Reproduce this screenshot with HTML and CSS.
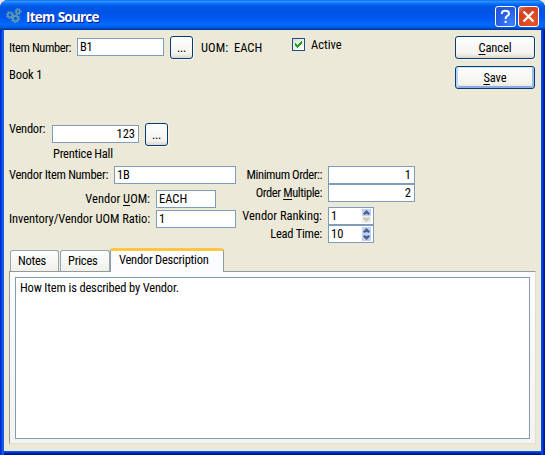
FILE: index.html
```
<!DOCTYPE html>
<html lang="en">
<head>
<meta charset="utf-8">
<title>Item Source</title>
<link rel="stylesheet" href="styles.css">
</head>
<body>
<div class="window">
  <header class="titlebar">
    <svg class="app-icon" width="16" height="16" viewBox="0 0 16 16" fill="none" stroke="#5e9caa">
      <circle cx="4" cy="7" r="2.2" stroke-width="1.6"/><circle cx="4" cy="7" r="3.5" stroke-width="1.2" stroke-dasharray="1.4 1.3"/>
      <circle cx="12" cy="3.5" r="1.8" stroke-width="1.4"/><circle cx="12" cy="3.5" r="3" stroke-width="1.2" stroke-dasharray="1.3 1.2"/>
      <circle cx="9.5" cy="10.5" r="2.6" stroke-width="1.8"/><circle cx="9.5" cy="10.5" r="4" stroke-width="1.3" stroke-dasharray="1.6 1.5"/>
    </svg>
    <h1 class="title">Item Source</h1>
    <button class="caption help" aria-label="Help"><svg width="19" height="19" viewBox="0 0 19 19" fill="none" stroke="#fff" stroke-width="2"><path d="M5.8 7V6Q6.2 3.7 9.5 3.7Q13 3.7 13 6.5Q13 8.1 11 9.2Q9.6 10 9.6 12M9.6 13.7V16"/></svg></button>
    <button class="caption close" aria-label="Close"><svg width="19" height="19" viewBox="0 0 19 19" fill="none" stroke="#fff" stroke-width="2.3"><path d="M4.5 4.5L14.5 14.5M14.5 4.5L4.5 14.5"/></svg></button>
  </header>
  <main class="content">
    <section class="top">
      <div class="identity">
        <div class="item-row">
          <span class="label item-label">Item Number:</span>
          <span class="field item-field">B1</span>
          <button class="btn browse">...</button>
          <span class="uom-label">UOM:</span><span class="uom-value">EACH</span>
          <span class="check"><svg width="11" height="11" viewBox="0 0 11 11" shape-rendering="crispEdges"><path d="M2 4v3l2 2 5-5V1L4 6z" fill="#21a121"/></svg></span>
          <span class="active-label">Active</span>
        </div>
        <div class="book">Book 1</div>
      </div>
      <div class="actions">
        <button class="btn action"><span class="cancel-text"><u>C</u>ancel</span></button>
        <button class="btn action default"><span><u>S</u>ave</span></button>
      </div>
    </section>
    <section class="vendor-row">
      <span class="vendor-label">Vendor:</span>
      <span class="field number vendor-field">123</span>
      <button class="btn browse">...</button>
    </section>
    <div class="vendor-name">Prentice Hall</div>
    <section class="details">
      <div class="left">
        <div class="row"><span class="vin-label">Vendor Item Number:</span><span class="field vin">1B</span></div>
        <div class="row vuom-row"><span class="lbl vuom-label">Vendor <u>U</u>OM:</span><span class="field vuom">EACH</span></div>
        <div class="row ratio-row"><span class="lbl ratio-label">Inventory/Vendor UOM Ratio:</span><span class="field ratio">1</span></div>
      </div>
      <div class="right">
        <div class="row"><span class="lbl min-label">Minimum Order::</span><span class="field number qty">1</span></div>
        <div class="row"><span class="lbl mult-label">Order <u>M</u>ultiple:</span><span class="field number qty">2</span></div>
        <div class="row rank-row"><span class="lbl rank-label">Vendor Ranking:</span><span class="field spin">1<span class="steps"><i class="step up"></i><i class="step down off"></i></span></span></div>
        <div class="row"><span class="lbl lead-label">Lead Time:</span><span class="field spin">10<span class="steps"><i class="step up"></i><i class="step down"></i></span></span></div>
      </div>
    </section>
    <nav class="tabs">
      <span class="tab notes">Notes</span><span class="tab prices">Prices</span><span class="tab selected"><span>Vendor Description</span></span>
    </nav>
    <section class="panel"><div class="memo">How Item is described by Vendor.</div></section>
  </main>
</div>
</body>
</html>
```
FILE: styles.css
```
* { box-sizing: border-box; }
body { margin: 0; background: #ece9d8; font: 12.5px/16px Roboto, "Liberation Sans", sans-serif; font-stretch: 85%; letter-spacing: -.25px; color: #000; }
.window { width: 545px; height: 455px; display: flex; flex-direction: column; overflow: hidden; border-radius: 8px 8px 0 0; background: linear-gradient(90deg, #0019cf 0, #0831d9 1px, #166aee 3px, #0855dd 4px, #0855dd 541px, #0046ee 542px, #001ea0 544px, #00138c 545px); }
.titlebar { height: 30px; flex: none; display: flex; align-items: flex-start; padding: 6px 6px 0; background: linear-gradient(#0058ee 0, #3593ff 1px, #288eff 2px, #127dff 3px, #036ffc 4px, #0262ee 5px, #0057e5 7px, #0054e3 12px, #0055eb 15px, #005bf5 20px, #026afe 24px, #0062ef 27px, #0052d6 28px, #0040ab 29px, #003092 30px); }
.app-icon { margin: 2px 4px 0 0; }
.title { margin: 2px auto 0 0; font: bold 13.5px/18px "Open Sans", "Noto Sans", sans-serif; letter-spacing: -.78px; word-spacing: .5px; color: #fff; text-shadow: 1px 1px #0f1089; }
.caption { width: 21px; height: 21px; padding: 0; border: 1px solid #fff; border-radius: 3px; margin-left: 2px; display: block; }
.caption svg { display: block; }
.help { background: radial-gradient(circle at 80% 90%, #3b80ff, #2355dd 75%); }
.close { background: radial-gradient(circle at 70% 80%, #e85528, #d34020 70%, #e48068); }
.content { width: 537px; height: 421px; margin-left: 4px; padding: 6px 6px 0 5px; background: #ece9d8; box-shadow: 0 1px #0855dd, 0 2px #0036dd, 0 3px #001ea0, 0 4px #00138c; white-space: nowrap; }
.top { display: flex; justify-content: space-between; height: 87px; }
.item-row { display: flex; align-items: center; height: 23px; }
.label { width: 68px; }
.item-label { letter-spacing: -.4px; }
.field { height: 18px; border: 1px solid #7f9db9; background: #fff; padding: 0 2px; line-height: 16px; flex: none; }
.item-field { width: 87px; margin: -1px 6px 0 0; }
.btn { height: 23px; padding: 0; border: 1px solid #003c74; border-radius: 3px; background: linear-gradient(#fff, #f3f2ed 80%, #dcd7cb); color: #000; font: inherit; letter-spacing: inherit; box-shadow: 1px 1px #f7f5ed; }
.browse { width: 23px; flex: none; line-height: 19px; }
.uom-label { margin-left: 8px; width: 33px; letter-spacing: .1px; }
.uom-value { width: 58px; letter-spacing: 0; }
.check { width: 13px; height: 13px; border: 1px solid #1c5180; background: linear-gradient(135deg, #dcdcd7, #fff); margin-top: -6px; }
.check svg { display: block; }
.active-label { margin: -6px 0 0 6px; letter-spacing: 0; }
.book { margin-top: 8px; letter-spacing: -.1px; }
.actions { display: flex; flex-direction: column; gap: 7px; }
.action { width: 80px; line-height: 21px; letter-spacing: -.1px; }
.default { box-shadow: inset 0 1px #cee7ff, inset 2px 0 #b9d2f5, inset -2px 0 #9ebcec, inset 0 -2px #89ade4; }
u { text-underline-offset: 2px; text-decoration-thickness: 1px; text-decoration-skip-ink: none; }
.vendor-row { display: flex; height: 23px; align-items: center; }
.vendor-label { width: 43px; margin-top: -11px; }
.number { text-align: right; padding-right: 3px; letter-spacing: 0; }
.vendor-field { width: 87px; margin: -1px 6px 0 0; }
.vendor-name { margin-left: 44px; line-height: 16px; }
.details { display: flex; height: 82px; margin-top: 4px; }
.left { width: 227px; }
.right { width: 179px; }
.row { display: flex; height: 18px; align-items: center; }
.right .row { justify-content: flex-end; }
.vin-label { width: 105px; letter-spacing: -.3px; }
.vin { width: 122px; }
.lbl { text-align: right; margin-right: 6px; flex: none; }
.vuom-row { margin-top: 6px; }
.ratio-row { margin-top: 2px; }
.left .lbl { width: 141px; }
.vuom-label { letter-spacing: 0; }
.ratio-label { letter-spacing: -.07px; }
.min-label, .mult-label { letter-spacing: -.43px; }
.rank-label { letter-spacing: -.03px; }
.vuom { width: 60px; letter-spacing: 0; }
.ratio { width: 80px; }
.qty { width: 87px; }
.rank-row { margin-top: 5px; }
.spin { width: 46px; margin-right: 41px; display: flex; justify-content: space-between; padding: 0 0 0 2px; letter-spacing: 0; }
.steps { display: flex; flex-direction: column; width: 10px; margin: 1px 1px 0 0; }
.step { width: 9px; height: 7px; background: #bfd1fc; display: flex; justify-content: center; align-items: center; }
.step::after { content: ""; width: 7px; height: 5px; background: #4d6185; clip-path: polygon(50% 0, 100% 70%, 80% 100%, 50% 75%, 20% 100%, 0 70%); }
.down::after { transform: rotate(180deg); }
.off { background: #eeede6; }
.off::after { background: #c9c7ba; }
.tabs { display: flex; height: 24px; align-items: flex-end; padding-left: 1px; }
.tab { height: 21px; border: 1px solid #91a7b4; border-bottom: 0; border-radius: 3px 3px 0 0; background: linear-gradient(#fff, #f0efe8); line-height: 19px; padding-left: 7px; margin-bottom: 1px; }
.notes { width: 49px; margin-right: 1px; }
.prices { width: 50px; }
.selected { width: 114px; height: 24px; margin-bottom: 0; border-top: 3px solid #ffc73c; border-color: #ffc73c #919b9c #919b9c; border-bottom: 0; background: #fcfcfe; padding-left: 8px; line-height: 17px; position: relative; z-index: 1; }
.panel { width: 527px; height: 173px; margin-top: -1px; border: 1px solid #919b9c; border-right-color: #e2dfd0; border-bottom-color: #e2dfd0; background: linear-gradient(#fcfcfe, #f4f3ee); padding: 5px; }
.memo { height: 162px; border: 1px solid #7f9db9; background: #fff; padding: 2px 4px; letter-spacing: -.17px; }
```
